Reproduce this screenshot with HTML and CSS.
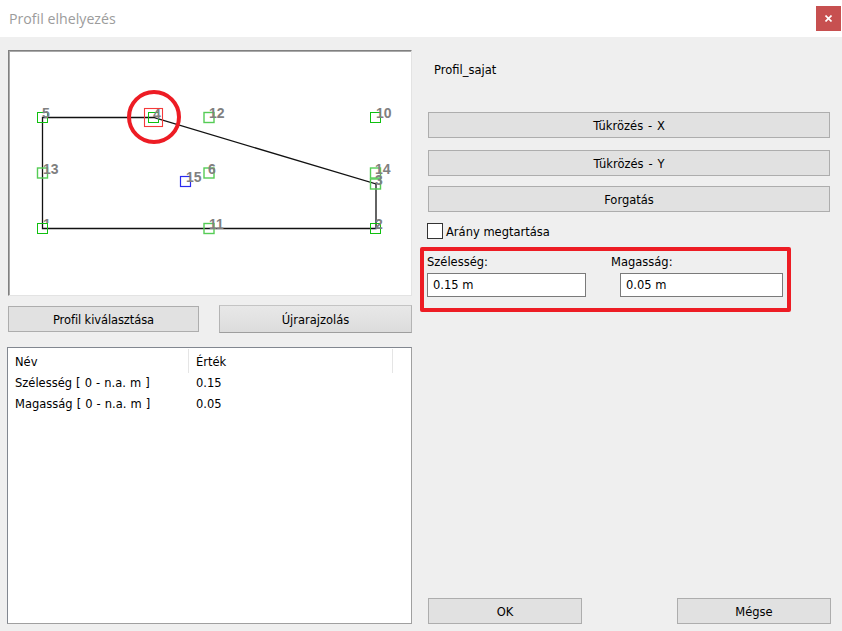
FILE: index.html
```html
<!DOCTYPE html>
<html lang="hu">
<head>
<meta charset="utf-8">
<title>Profil elhelyezés</title>
<link rel="stylesheet" href="styles.css">
</head>
<body>
<div class="dialog">
  <header class="titlebar">
    <span class="title">Profil elhelyezés</span>
    <button class="close" aria-label="Bezárás">
      <svg width="7" height="7" viewBox="0 0 7 7"><path d="M0.5 0.5L6.5 6.5M6.5 0.5L0.5 6.5" stroke="#fff" stroke-width="1.6" fill="none"/></svg>
    </button>
  </header>
  <main class="content">
    <section class="left">
      <div class="canvas">
        <svg width="402" height="244" viewBox="9 51 402 244">
          <defs><clipPath id="above-node"><rect x="37" y="210" width="20" height="13"/></clipPath></defs>
          <path class="shape" d="M42.5 117.5H153.5L376 184V228.5H42.5Z"/>
          <text class="num" x="43" y="229" clip-path="url(#above-node)">1</text>
          <rect class="node" x="37.5" y="112.5" width="10" height="10"/>
          <rect class="node" x="148.5" y="112.5" width="10" height="10"/>
          <rect class="node soft" x="204" y="112.5" width="10" height="10"/>
          <rect class="node" x="370.5" y="112.5" width="10" height="10"/>
          <rect class="node soft" x="37.5" y="168" width="10" height="10"/>
          <rect class="node soft" x="204" y="168" width="10" height="10"/>
          <rect class="node soft" x="370.5" y="168" width="10" height="10"/>
          <rect class="node soft" x="370.5" y="179" width="10" height="10"/>
          <rect class="node" x="37.5" y="223.5" width="10" height="10"/>
          <rect class="node soft" x="204" y="223.5" width="10" height="10"/>
          <rect class="node" x="370.5" y="223.5" width="10" height="10"/>
          <rect class="node-blue" x="180.5" y="176.5" width="10" height="10"/>
          <rect class="node-red" x="144.5" y="108.5" width="18" height="18"/>
          <text class="num" x="42" y="118">5</text>
          <text class="num" x="153" y="119">4</text>
          <text class="num" x="209" y="118">12</text>
          <text class="num" x="376" y="118">10</text>
          <text class="num" x="43" y="174">13</text>
          <text class="num" x="208" y="174">6</text>
          <text class="num" x="375" y="174">14</text>
          <text class="num" x="186" y="182">15</text>
          <text class="num" x="375" y="185">3</text>
          <text class="num" x="209" y="229">11</text>
          <text class="num" x="375" y="229">2</text>
          <circle class="mark" cx="154" cy="117" r="25"/>
        </svg>
      </div>
      <div class="actions">
        <button class="btn pick">Profil kiválasztása</button>
        <button class="btn redraw">Újrarajzolás</button>
      </div>
      <div class="list">
        <div class="list-head">
          <span class="col-name">Név</span>
          <span class="col-value">Érték</span>
          <span class="col-rest"></span>
        </div>
        <div class="list-row"><span class="col-name">Szélesség [ 0 - n.a. m ]</span><span class="col-value">0.15</span></div>
        <div class="list-row"><span class="col-name">Magasság [ 0 - n.a. m ]</span><span class="col-value">0.05</span></div>
      </div>
    </section>
    <section class="right">
      <div class="profile-name">Profil_sajat</div>
      <button class="btn wide first">Tükrözés - X</button>
      <button class="btn wide second">Tükrözés - Y</button>
      <button class="btn wide third">Forgatás</button>
      <label class="check"><span class="box"></span><span class="check-text">Arány megtartása</span></label>
      <div class="fields">
        <div class="field width-field">
          <div class="field-label">Szélesség:</div>
          <input class="input" value="0.15 m">
        </div>
        <div class="field height-field">
          <div class="field-label">Magasság:</div>
          <input class="input" value="0.05 m">
        </div>
        <div class="highlight"></div>
      </div>
      <div class="footer">
        <button class="btn foot">OK</button>
        <button class="btn foot">Mégse</button>
      </div>
    </section>
  </main>
</div>
</body>
</html>
```
FILE: styles.css
```css
* { box-sizing: border-box; }
html, body { margin: 0; height: 100%; }
body {
  background: #efefef;
  color: #000;
  font: 11.5px/16px "DejaVu Sans", "Noto Sans", sans-serif;
}
.dialog { width: 842px; height: 631px; display: flex; flex-direction: column; overflow: hidden; }
.titlebar {
  height: 37px;
  flex: none;
  background: #fff;
  display: flex;
  align-items: center;
  justify-content: space-between;
  padding: 0 1px 0 9px;
}
.title { font: 14.2px/20px "Open Sans", sans-serif; color: #9c9c9c; }
.close {
  width: 25px;
  height: 25px;
  border: 0;
  padding: 0;
  background: #c75050;
  display: flex;
  align-items: center;
  justify-content: center;
}
.content { flex: 1; display: flex; min-height: 0; }
.left { width: 428px; flex: none; padding: 13px 0 0 7px; }
.right { flex: 1; display: flex; flex-direction: column; min-width: 0; }
.canvas {
  width: 404px;
  height: 246px;
  margin-left: 1px;
  background: #fff;
  border: 1px solid #e3e3e3;
  border-top-color: #808080;
  border-left-color: #808080;
  box-shadow: inset 1px 1px 0 #a9a9a9;
}
.canvas svg { display: block; }
.shape { fill: none; stroke: #111; stroke-width: 1.3; }
.node { fill: none; stroke: #10c010; stroke-width: 1; }
.node.soft { stroke: #55cc55; stroke-width: 1.4; }
.node-blue { fill: none; stroke: #2a2aee; stroke-width: 1.2; }
.node-red { fill: none; stroke: #f53a3a; stroke-width: 1.1; }
.mark { fill: none; stroke: #ed1c24; stroke-width: 4; }
.num { font: bold 14px "Liberation Sans", sans-serif; fill: #808080; }
.btn {
  font: 11.5px/16px "DejaVu Sans", "Noto Sans", sans-serif;
  color: #000;
  background: #e1e1e1;
  border: 1px solid #adadad;
  border-radius: 0;
  padding: 2px 0 0;
  height: 26px;
}
.actions { display: flex; align-items: center; justify-content: space-between; width: 404px; height: 28px; margin: 9px 0 0 1px; }
.pick { width: 191px; letter-spacing: -0.1px; }
.redraw {
  width: 193px;
  height: 28px;
  border-color: #c4c4c4 #b4b4b4 #9e9e9e;
  background: linear-gradient(#e8e8e8, #dcdcdc);
}
.list {
  width: 405px;
  height: 277px;
  margin-top: 14px;
  background: #fff;
  border: 1px solid #a0a0a0;
  border-top-color: #828790;
  border-left-color: #828790;
  word-spacing: 0.4px;
}
.list-head, .list-row { display: flex; }
.list-head { height: 25px; padding-top: 1px; }
.list-head span { height: 24px; line-height: 27px; }
.list-row { height: 21px; line-height: 20px; }
.col-name { width: 181px; padding-left: 7px; flex: none; }
.col-value { width: 204px; padding-left: 7px; flex: none; }
.list-head .col-name, .list-head .col-value { border-right: 1px solid #e5e5e5; }
.profile-name { height: 16px; margin: 25px 0 0 6px; }
.wide { width: 402px; flex: none; word-spacing: 1.2px; }
.first { margin-top: 34px; }
.second { margin-top: 12px; }
.third { margin-top: 10px; }
.check { display: flex; align-items: center; height: 16px; margin: 11px 0 0 -1px; }
.box { width: 16px; height: 16px; margin-right: 3px; background: #fff; border: 1px solid #333; }
.check-text { padding-top: 2px; }
.fields { position: relative; display: flex; margin: 14px 0 0 -1px; height: 48px; }
.field { display: flex; flex-direction: column; }
.width-field { width: 184px; }
.height-field { width: 172px; }
.field-label { height: 16px; line-height: 18px; margin-bottom: 4px; }
.input {
  font: 11.5px "DejaVu Sans", "Noto Sans", sans-serif;
  height: 24px;
  background: #fff;
  border: 1px solid #7a7a7a;
  border-radius: 0;
  padding: 0 5px;
  outline: 0;
  color: #000;
}
.width-field .input { width: 159px; }
.height-field .input { width: 163px; margin-left: 9px; }
.highlight {
  position: absolute;
  left: -7px;
  top: -6px;
  width: 371px;
  height: 65px;
  border: 4px solid #ed1c24;
  border-radius: 2px;
}
.footer { display: flex; justify-content: space-between; width: 403px; margin-top: auto; margin-bottom: 7px; }
.foot { width: 154px; }
```
